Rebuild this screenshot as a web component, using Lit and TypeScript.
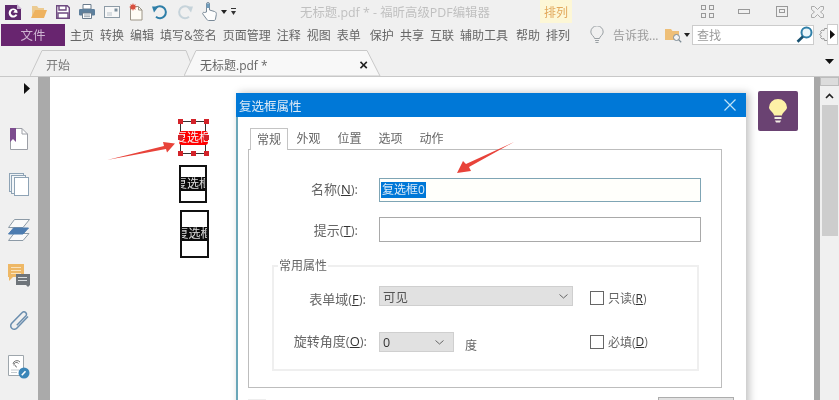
import { LitElement, html, css, svg } from "lit";
import { customElement } from "lit/decorators.js";

const icons = {
  logo: svg`<svg width="17" height="16" viewBox="0 0 17 16"><path d="M0 1h12l4 4v11H0z" fill="#5f2a6e"/><path d="M12 0l5 5h-5z" fill="#c9b6d2"/><path d="M12.2 6.6A4.6 4.6 0 1 0 12.4 11l-1.8-.7A2.6 2.6 0 1 1 9.8 6.5l-1.6 2 4.4.6z" fill="#fff"/></svg>`,
  folder: svg`<svg width="16" height="15" viewBox="0 0 16 15"><path d="M1 2h5l1.5 2H13v3H4L1 13z" fill="#eccb92"/><path d="M4 6h12l-3 8H0z" fill="#eeb25f"/></svg>`,
  save: svg`<svg width="14" height="14" viewBox="0 0 14 14"><path d="M.7.7h10.6l2 2v10.6H.7z" fill="#fff" stroke="#6e4a80" stroke-width="1.4"/><path d="M3 1v4h7V1M2 13V8h10v5" fill="none" stroke="#6e4a80" stroke-width="1.4"/></svg>`,
  print: svg`<svg width="16" height="15" viewBox="0 0 16 15"><path d="M4 .5h8V5H4z" fill="#fff" stroke="#6b7c8c"/><rect y="5" width="16" height="6.5" rx="1.2" fill="#5d7f9c"/><path d="M3.5 9h9v5.5h-9z" fill="#fff" stroke="#6b7c8c"/><path d="M5 11h6M5 12.7h6" stroke="#9aa6b0"/></svg>`,
  mail: svg`<svg width="16" height="12" viewBox="0 0 16 12"><rect x=".5" y=".5" width="15" height="11" fill="#f8f8f8" stroke="#8d9ba6"/><path d="M3 7h5M3 9h5" stroke="#b9c2c9"/><rect x="10.5" y="2.5" width="3" height="3" fill="#7d8f9d"/></svg>`,
  newdoc: svg`<svg width="14" height="18" viewBox="0 0 14 18"><path d="M1.500 3.500h8l3.500 3.500v10H1.500z" fill="#fffdf5" stroke="#9b9486"/><path d="M9.500 3.500V7H13" fill="none" stroke="#9b9486"/><path d="M4 0l.8 2 2-.8-.8 2 2 .8-2 .8.8 2-2-.8-.8 2-.8-2-2 .8.800-2-2-.8 2-.8-.8-2 2 .8z" fill="#d9503f"/></svg>`,
  undo: svg`<svg width="16" height="16" viewBox="0 0 16 16"><path d="M3.800 3.800A6 6 0 1 1 4 12.800" fill="none" stroke="#2f7fa8" stroke-width="2"/><path d="M0 2.500l6.500 0L2 8.500z" fill="#2f7fa8"/></svg>`,
  redo: svg`<svg width="16" height="16" viewBox="0 0 16 16"><path d="M12.200 3.800A6 6 0 1 0 12 12.800" fill="none" stroke="#c6d3da" stroke-width="2"/><path d="M16 2.500l-6.500 0L14 8.500z" fill="#c6d3da"/></svg>`,
  hand: svg`<svg width="15" height="19" viewBox="0 0 15 19"><path d="M4.500 10V2a1.500 1.500 0 0 1 3 0v6l5 1.500c1.500.5 2 1.500 1.800 3l-.8 4.500c-.1 1-.8 1.500-1.500 1.500H6.500c-.8 0-1.200-.4-1.600-1L.800 12c-.6-1 .6-2.200 1.700-1.500z" fill="#fdfdfd" stroke="#7a8a98"/><path d="M4.500 1.500h3V6h-3z" fill="#6f9dbd"/></svg>`,
  caret: svg`<svg width="6" height="4" viewBox="0 0 6 4"><path d="M0 0h6L3 4z" fill="#222"/></svg>`,
  more: svg`<svg width="5" height="7" viewBox="0 0 5 7"><path d="M0 0h5v1H0zM0 3h5L2.500 7z" fill="#333"/></svg>`,
  grid: svg`<svg width="13" height="13" viewBox="0 0 13 13" fill="none" stroke="#999"><rect x=".5" y=".5" width="4" height="4"/><rect x="8.500" y=".5" width="4" height="4"/><rect x=".5" y="8.500" width="4" height="4"/><rect x="8.500" y="8.500" width="4" height="4"/></svg>`,
  min: svg`<svg width="12" height="5" viewBox="0 0 12 5"><rect x=".5" y=".5" width="11" height="4" fill="none" stroke="#999"/></svg>`,
  max: svg`<svg width="12" height="11" viewBox="0 0 12 11" fill="none" stroke="#999"><rect x=".5" y=".5" width="11" height="10"/><rect x="3.500" y="3.500" width="5" height="3"/></svg>`,
  close: svg`<svg width="13" height="12" viewBox="0 0 13 12" fill="none" stroke="#aaa"><path d="M.5.500h3l3 3 3-3h3v3l-3 2.500 3 2.500v3h-3l-3-3-3 3h-3v-3l3-2.500-3-2.500z"/></svg>`,
  bulb: svg`<svg width="14" height="18" viewBox="0 0 14 18" fill="none" stroke="#9aa0a4"><path d="M4.500 12.500c0-2-3.700-3.500-3.700-6.500a6.200 6.200 0 0 1 12.400 0c0 3-3.700 4.500-3.700 6.500z"/><path d="M5 14.500h4M5.500 16.500h3"/></svg>`,
  findfolder: svg`<svg width="17" height="16" viewBox="0 0 17 16"><path d="M0 2h6l1.500 2H14v9H0z" fill="#eebf78"/><circle cx="11.500" cy="10.500" r="3" fill="#f3f3f3" stroke="#7c8b95"/><path d="M13.600 12.600l2.600 2.600" stroke="#7c8b95" stroke-width="1.300"/></svg>`,
  mag: svg`<svg width="17" height="17" viewBox="0 0 17 17"><circle cx="10.500" cy="6.500" r="5" fill="#eaf6fb" stroke="#2f7fa8" stroke-width="2"/><path d="M7 10.500L1.500 15.800" stroke="#17506f" stroke-width="2.600"/></svg>`,
  gear: svg`<svg width="8" height="15" viewBox="0 0 8 15"><path d="M8 1.500H5.500L5 3.500 3 3 1.500 4.500l1 1.500L.5 7.500l2 1.500-1 1.500L3 12l2-.5.500 2H8" fill="none" stroke="#999"/></svg>`,
  play: svg`<svg width="5" height="9" viewBox="0 0 5 9"><path d="M0 0l5 4.500L0 9z" fill="#111"/></svg>`,
  railPlay: svg`<svg width="6" height="11" viewBox="0 0 6 11"><path d="M0 0l6 5.500L0 11z" fill="#111"/></svg>`,
  down: svg`<svg width="9" height="5" viewBox="0 0 9 5"><path d="M0 0h9L4.500 5z" fill="#111"/></svg>`,
  scrollUp: svg`<svg width="9" height="6" viewBox="0 0 9 6"><path d="M1 5l3.500-3.500L8 5" fill="none" stroke="#222" stroke-width="1.600"/></svg>`,
  chev: svg`<svg width="9" height="5" viewBox="0 0 9 5"><path d="M.5.500l4 3.500 4-3.500" fill="none" stroke="#666"/></svg>`,
  bookmarks: svg`<svg width="18" height="22" viewBox="0 0 18 22"><path d="M.5.500h11.500l5.500 5.500v15.500H.5z" fill="#fff" stroke="#9c9fa6"/><path d="M12 .5V6h5.500" fill="none" stroke="#9c9fa6"/><path d="M0 0h6v14l-3-3-3 3z" fill="#7d4d8f"/></svg>`,
  pages: svg`<svg width="20" height="23" viewBox="0 0 20 23" fill="#fff" stroke="#8ea3b5"><rect x=".5" y=".5" width="14" height="18" fill="#eef2f5"/><rect x="2.500" y="2.500" width="14" height="18" fill="#f4f7f9"/><rect x="5.500" y="4.500" width="14" height="18"/></svg>`,
  layers: svg`<svg width="22" height="22" viewBox="0 0 22 22" stroke="#8c9aa6"><path d="M6.500.5h15L15 8.500H.5z" fill="#fafafa"/><path d="M6 14.500h15L15 21.500H.5z" fill="#fafafa"/><path d="M5.500 9h15L15 15H.5z" fill="#4d7cb0" stroke="#4d7cb0"/></svg>`,
  comments: svg`<svg width="22" height="23" viewBox="0 0 22 23"><path d="M0 0h16v13H5l-4 4v-4H0z" fill="#eeb866"/><path d="M3 3.500h10M3 6.500h10M3 9.500h10" stroke="#f9e2bd"/><path d="M8 10h14v11l-2 2-2-2H8z" fill="#6e747a"/><path d="M10 13.500h9M10 16.500h9" stroke="#d8dcdf"/></svg>`,
  clip: svg`<svg width="21" height="22" viewBox="0 0 21 22"><path d="M19 6.500L8 18a3.500 3.500 0 0 1-5.500-4.500L13 2.800a2.400 2.400 0 0 1 4 3L7.800 15.300" fill="none" stroke="#6b8eae" stroke-width="1.500"/></svg>`,
  cert: svg`<svg width="22" height="24" viewBox="0 0 22 24"><path d="M.5.500h15v20H.5z" fill="#fff" stroke="#9ea6ac"/><path d="M5 9a4 4 0 0 1 7-2M6 10.500a2.500 2.500 0 0 1 4.500-2M9 12c-1.500 0-2-1-1.500-2" fill="none" stroke="#777"/><path d="M3 15h8M3 17.500h6" stroke="#c4cace"/><circle cx="16" cy="18" r="5.500" fill="#3b86b8"/><path d="M13.800 20.200l3.700-3.900" stroke="#fff" stroke-width="1.600"/></svg>`,
  lamp: svg`<svg width="18" height="25" viewBox="0 0 18 25"><path d="M5 16.500C5 13.500 0 11.500 0 8.500a9 8.500 0 0 1 18 0c0 3-5 5-5 8z" fill="#fdf1a7"/><path d="M5.500 18h7v2h-7z M6 21.500h6l-1 2H7z" fill="#f3eee3"/></svg>`,
};

@customElement("app-root")
export class AppRoot extends LitElement {
  static styles = css`
    :host {
      display: block;
      width: 839px;
      height: 400px;
      font-family: "Open Sans", "Noto Sans CJK SC", sans-serif;
      font-size: 12px;
      color: #666;
    }
    svg { display: block; flex: none; }
    .app {
      position: relative;
      width: 839px;
      height: 400px;
      overflow: hidden;
      background: #f0f0f0;
      display: flex;
      flex-direction: column;
      filter: blur(0.35px);
    }
    .titlebar { height: 23px; display: flex; align-items: center; flex: none; position: relative; }
    .qa { display: flex; align-items: center; padding-left: 5px; }
    .qa > * { margin-right: 9px; }
    .qa .tight { margin-right: 4px; }
    .title { margin-left: 55px; width: 240px; color: #c0c0c0; font-size: 12.4px; white-space: nowrap; flex: none; }
    .ctx {
      width: 32px; height: 23px; background: #fdf7d6; color: #e2a85c; flex: none;
      display: flex; align-items: center; justify-content: center; font-size: 12px; white-space: nowrap;
    }
    .wctl { display: flex; align-items: center; margin-left: 129px; }
    .wctl > :nth-child(1) { margin-right: 24px; }
    .wctl > :nth-child(2) { margin-right: 26px; }
    .wctl > :nth-child(3) { margin-right: 23px; }

    .ribbon { height: 23px; display: flex; align-items: center; flex: none; }
    .file {
      width: 64px; height: 22px; margin-left: 1px; background: #68256f; color: #cdb3d1;
      display: flex; align-items: center; justify-content: center; font-size: 12.5px; flex: none;
    }
    .menu { display: flex; margin-left: 5px; width: 505px; white-space: nowrap; flex: none; }
    .menu span { margin-right: 6px; }
    .menu span.gap { margin-left: 3px; }
    .menu span.long { margin-right: 8px; }
    .ask { display: flex; align-items: center; margin-left: 15px; }
    .ask span { margin: 0 6px 0 9px; color: #9a9a9a; width: 46px; white-space: nowrap; }
    .ask span.car { margin: 0 0 0 2px; width: auto; }
    .search {
      width: 122px; height: 20px; margin-left: 2px; box-sizing: border-box; background: #fff; border: 1px solid #ccc;
      display: flex; align-items: center; justify-content: space-between; padding: 0 0 0 4px; color: #999; flex: none;
    }
    .gearwrap { margin-left: 5px; }
    .playbtn {
      width: 11px; height: 21px; background: #fff; border: 1px solid #ccc; box-sizing: border-box;
      display: flex; align-items: center; justify-content: center; flex: none;
    }

    .tabs { height: 31px; flex: none; display: flex; position: relative; border-bottom: 1px solid #c8c8c8; box-sizing: border-box; }
    .tab { position: relative; height: 26px; margin-top: 4px; padding-top: 3px; display: flex; align-items: center; color: #777; flex: none; box-sizing: border-box; }
    .tab svg.shape { position: absolute; left: 0; top: 0; width: 100%; height: 100%; }
    .tab > span, .tab > b { position: relative; }
    .t1 { width: 166px; margin-left: 30px; padding-left: 16px; }
    .t2 { width: 197px; margin-left: -12px; padding-left: 16px; }
    .t2 b { margin-left: auto; margin-right: 13px; font: 700 15px "Liberation Sans", sans-serif; color: #222; }
    .t2 span { color: #666; font-size: 12px; }
    .tabdown { margin-left: auto; margin-right: 5px; margin-top: 13px; }

    .main { flex: 1; display: flex; min-height: 0; }
    .rail { width: 38px; flex: none; display: flex; flex-direction: column; align-items: center; }
    .rail .top { height: 39px; width: 100%; display: flex; justify-content: flex-end; padding: 6px 8px 0 0; box-sizing: border-box; }
    .rail .slot { height: 45.6px; display: flex; align-items: center; justify-content: center; flex: none; }
    .split {
      width: 12px; flex: none; background: #aaa; display: flex; align-items: center;
    }
    .grip {
      width: 5px; height: 40px; margin: 62px 0 0 2px;
      background-image: radial-gradient(#999 0.6px, transparent 0.7px);
      background-size: 2px 2px;
    }
    .canvas { flex: 1; background: #fff; position: relative; min-width: 0; }
    .rsplit { width: 6px; flex: none; background: #a8a8a8; }
    .scroll { width: 19px; flex: none; background: #f0f0f0; display: flex; flex-direction: column; align-items: center; }
    .scroll .cap { width: 100%; height: 9px; box-sizing: border-box; background: #dcdcdc; border: 1px solid #bdbdbd; flex: none; }
    .scroll .up { height: 19px; display: flex; align-items: center; justify-content: center; flex: none; }
    .scroll .thumb { width: 16px; height: 131px; background: #cdcdcd; }

    .fld { position: absolute; box-sizing: border-box; border: 2px solid #111; display: flex; align-items: center; justify-content: center; background: #fff; }
    .band {
      width: 100%; height: 14px; background: #0b0b0b; color: #ddd; font-size: 12px; line-height: 14px; flex: none;
      white-space: nowrap; overflow: hidden; display: flex; justify-content: center;
    }
    .fld.sel { border-width: 1px; border-color: #333; }
    .fld.sel .band { background: #f00; color: #f5f5f5; width: 29px; border-radius: 3px; }
    .h { position: absolute; width: 5px; height: 5px; background: #d3232a; }

    .lamp {
      position: absolute; left: 708px; top: 14px; width: 40px; height: 40px; border-radius: 2px; background: #6a4272;
      display: flex; align-items: center; justify-content: center;
    }

    .dialog {
      position: absolute; left: 186px; top: 16px; width: 510px; height: 340px; box-sizing: border-box;
      background: #fff; border-left: 2px solid #6aa6b8; box-shadow: 3px 0 8px rgba(0,0,0,.25);
      display: flex; flex-direction: column;
    }
    .dtitle {
      height: 24px; background: #0078d7; color: #dceaf6; flex: none; margin-left: -2px;
      display: flex; align-items: center; justify-content: space-between; padding: 0 10px 0 3px; font-size: 12.5px;
    }
    .dtabs { display: flex; margin: 11px 0 0 12px; height: 21px; flex: none; }
    .dtabs span { width: 41px; text-align: center; line-height: 21px; font-size: 12px; }
    .dtabs span.on {
      width: 38px; box-sizing: border-box; height: 22px; border: 1px solid #c4c4c4; border-bottom: none; background: #fff;
      position: relative; z-index: 1;
    }
    .panel {
      margin-left: 10px; width: 474px; height: 239px; flex: none; box-sizing: border-box; border: 1px solid #bdbdbd; padding-top: 28px;
    }
    .row { display: grid; grid-template-columns: 130px 322px; align-items: center; }
    .row + .row { margin-top: 15px; }
    .lab { text-align: right; padding-right: 21px; white-space: nowrap; font-size: 13px; }
    .row:first-child .lab { margin-bottom: 3px; }
    .lab u, .chk u { color: #333; }
    .input { box-sizing: border-box; height: 24px; border: 1.5px solid #a9a9a9; background: #fff; display: flex; align-items: center; padding-left: 1px; }
    .input.active { border-color: #7fa5b5; background: #fffffb; }
    .input.tall { height: 25px; }
    .selected { background: #0078d7; color: #d8eaf8; height: 16px; line-height: 16px; padding: 0 1px; font-size: 12px; }
    .group {
      margin: 23px 0 0 23px; width: 427px; height: 106px; box-sizing: border-box; border: 2px solid #efefef;
      display: grid; grid-template-columns: 105px 211px 1fr; grid-template-rows: 20px 20px; row-gap: 26px; align-items: center; padding-top: 19px; position: relative;
    }
    .legend { position: absolute; left: 4px; top: -9px; background: #fff; padding: 0 1px; font-size: 12px; line-height: 16px; }
    .group .lab { padding-right: 13px; }
    .group .lab.l1 { margin-top: 4px; }
    .group .lab.l2 { margin-bottom: 4px; padding-right: 12px; }
    .sel2 {
      box-sizing: border-box; height: 20px; background: #e1e1e1; border: 1px solid #cfcfcf; display: flex; align-items: center;
      justify-content: space-between; padding: 0 4px 0 3px; color: #555; font-size: 12.5px;
    }
    .sel2 span { margin-top: 1px; }
    .w1 { width: 194px; }
    .w2 { width: 75px; padding-right: 9px; color: #333; }
    .deg { display: flex; align-items: center; }
    .deg > span { margin: 5px 0 0 11px; }
    .chk { display: flex; align-items: center; font-size: 12px; white-space: nowrap; }
    .chk.c1 { margin-top: 4px; }
    .chk.c2 { margin-bottom: 1px; }
    .box { width: 14px; height: 14px; box-sizing: border-box; border: 1px solid #666; margin-right: 4px; background: #fff; flex: none; }
    .foot { display: flex; justify-content: space-between; margin: 9px 12px 0 10px; flex: none; }
    .faint { width: 18px; height: 14px; margin-top: 2px; box-sizing: border-box; border: 1px solid #eee; }
    .btn { width: 76px; height: 24px; box-sizing: border-box; background: #e1e1e1; border: 1px solid #adadad; }

    .arrows { position: absolute; left: 0; top: 0; pointer-events: none; }
  `;

  render() {
    const menu = ["主页", "转换", "编辑", "填写&签名", "页面管理", "注释", "视图", "表单", "保护", "共享", "互联", "辅助工具", "帮助", "排列"];
    const handles = [
      [0, 0], [13, 0], [26, 0], [0, 16], [26, 16], [0, 32], [13, 32], [26, 32],
    ];
    return html`
      <div class="app">
        <div class="titlebar">
          <div class="qa">
            ${icons.logo}${icons.folder}${icons.save}${icons.print}${icons.mail}${icons.newdoc}${icons.undo}${icons.redo}
            <span class="tight">${icons.hand}</span><span class="tight">${icons.caret}</span>${icons.more}
          </div>
          <div class="title">无标题.pdf * - 福昕高级PDF编辑器</div>
          <div class="ctx">排列</div>
          <div class="wctl">${icons.grid}${icons.min}${icons.max}${icons.close}</div>
        </div>
        <div class="ribbon">
          <div class="file">文件</div>
          <div class="menu">${menu.map((m) => html`<span class=${m === "辅助工具" ? "long" : m === "保护" ? "gap" : ""}>${m}</span>`)}</div>
          <div class="ask">${icons.bulb}<span>告诉我...</span>${icons.findfolder}<span class="car">${icons.caret}</span></div>
          <div class="search">查找 ${icons.mag}</div>
          <div class="gearwrap">${icons.gear}</div>
          <div class="playbtn">${icons.play}</div>
        </div>
        <div class="tabs">
          <div class="tab t1">
            <svg class="shape" viewBox="0 0 166 26" preserveAspectRatio="none"><path d="M0 26L12 .5h144l10 25.500" fill="#f0f0f0" stroke="#c8c8c8"/></svg>
            <span>开始</span>
          </div>
          <div class="tab t2">
            <svg class="shape" viewBox="0 0 197 26" preserveAspectRatio="none"><path d="M0 26L12 .5h171L196 26z" fill="#f8f8f8" stroke="#c8c8c8"/></svg>
            <span>无标题.pdf *</span><b>×</b>
          </div>
          <div class="tabdown">${icons.down}</div>
        </div>
        <div class="main">
          <div class="rail">
            <div class="top">${icons.railPlay}</div>
            <div class="slot">${icons.bookmarks}</div>
            <div class="slot">${icons.pages}</div>
            <div class="slot">${icons.layers}</div>
            <div class="slot">${icons.comments}</div>
            <div class="slot">${icons.clip}</div>
            <div class="slot">${icons.cert}</div>
          </div>
          <div class="split"><div class="grip"></div></div>
          <div class="canvas">
            <div class="fld sel" style="left:130px;top:44px;width:26px;height:33px">
              <div class="band">复选框</div>
              ${handles.map(([x, y]) => html`<i class="h" style="left:${x - 3}px;top:${y - 3}px"></i>`)}
            </div>
            <div class="fld" style="left:129px;top:88px;width:28px;height:38px"><div class="band">复选框</div></div>
            <div class="fld" style="left:130px;top:133px;width:29px;height:48px"><div class="band">复选框</div></div>
            <div class="lamp">${icons.lamp}</div>
            <div class="dialog">
              <div class="dtitle"><span>复选框属性</span>
                <svg width="12" height="12" viewBox="0 0 12 12"><path d="M.5.500l11 11M11.500.500l-11 11" stroke="#bfe3f7" stroke-width="1.200"/></svg>
              </div>
              <div class="dtabs"><span class="on">常规</span><span>外观</span><span>位置</span><span>选项</span><span>动作</span></div>
              <div class="panel">
                <div class="row"><div class="lab">名称(<u>N</u>):</div><div class="input active"><span class="selected">复选框0</span></div></div>
                <div class="row"><div class="lab">提示(<u>T</u>):</div><div class="input tall"></div></div>
                <div class="group">
                  <div class="legend">常用属性</div>
                  <div class="lab l1">表单域(<u>F</u>):</div>
                  <div><div class="sel2 w1"><span>可见</span>${icons.chev}</div></div>
                  <div class="chk c1"><i class="box"></i>只读(<u>R</u>)</div>
                  <div class="lab l2">旋转角度(<u>O</u>):</div>
                  <div class="deg"><div class="sel2 w2"><span>0</span>${icons.chev}</div><span>度</span></div>
                  <div class="chk c2"><i class="box"></i>必填(<u>D</u>)</div>
                </div>
              </div>
              <div class="foot"><div class="faint"></div><div class="btn"></div></div>
            </div>
          </div>
          <div class="rsplit"></div>
          <div class="scroll"><div class="cap"></div><div class="up">${icons.scrollUp}</div><div class="thumb"></div></div>
        </div>
        <svg class="arrows" width="839" height="400" viewBox="0 0 839 400">
          <path d="M107 160L164 146l-1-4 12 1.500-8 9-1-3.500z" fill="#e8433a"/>
          <path d="M514 142L469 167l2 4-14 2 6-12 3 3z" fill="#e8433a"/>
        </svg>
      </div>
    `;
  }
}
